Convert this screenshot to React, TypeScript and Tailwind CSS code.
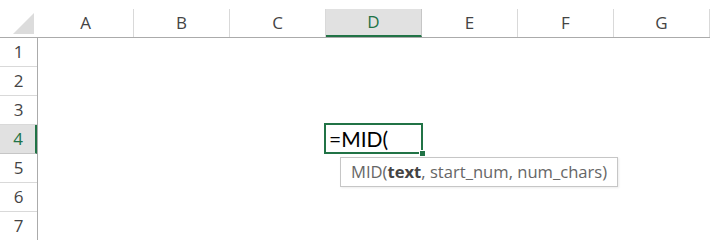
import React from "react";

const cols = ["A", "B", "C", "D", "E", "F", "G"];
const rows = [1, 2, 3, 4, 5, 6, 7];

export default function App() {
  return (
    <div className="relative w-[710px] h-[240px] overflow-hidden bg-white font-['Open_Sans',sans-serif]">
      {/* Column headers */}
      <div className="flex h-[38px] pt-[9px] border-b border-[#ababab]">
        <div className="relative w-[38px] shrink-0">
          <div className="absolute left-[13px] top-[4px] w-0 h-0 border-l-[21px] border-l-transparent border-b-[21px] border-b-[#dcdcdc]" />
        </div>
        {cols.map((c) => (
          <div
            key={c}
            className={
              c === "D"
                ? "w-[96px] shrink-0 flex items-center justify-center bg-[#e1e1e1] border-b-2 border-[#217346] text-[#217346] text-[17px] border-r border-r-[#c6c6c6]"
                : "w-[96px] shrink-0 flex items-center justify-center text-[#444] text-[17px] border-r border-[#d9d9d9]"
            }
          >
            {c}
          </div>
        ))}
      </div>

      {/* Rows */}
      <div className="flex">
        <div className="w-[38px] shrink-0 border-r border-[#ababab]">
          {rows.map((r) => (
            <div
              key={r}
              className={
                r === 4
                  ? "h-[29px] flex items-center justify-center bg-[#e1e1e1] border-r-2 border-[#217346] border-b border-b-[#c6c6c6] text-[#217346] text-[17px] pl-[1px]"
                  : "h-[29px] flex items-center justify-center border-b border-[#d9d9d9] text-[#444] text-[17px]"
              }
            >
              {r}
            </div>
          ))}
        </div>
        <div className="flex-1" />
      </div>

      {/* Active cell D4 */}
      <div className="absolute left-[324px] top-[123px] w-[99px] h-[31px] border-2 border-[#217346] flex items-center pl-[3px]">
        <span className="font-['Lato',sans-serif] text-[21px] text-black leading-none">=MID(</span>
        <div className="absolute right-[-5px] bottom-[-5px] w-[7px] h-[7px] bg-[#217346] border border-white" />
      </div>

      {/* Function tooltip */}
      <div className="absolute left-[340px] top-[157px] h-[30px] px-[10px] flex items-center bg-white border border-[#c6c6c6] shadow-[1px_1px_2px_rgba(0,0,0,0.08)] text-[16.6px] text-[#666] whitespace-nowrap">
        MID(<span className="font-bold text-[#444]">text</span>, start_num, num_chars)
      </div>
    </div>
  );
}
